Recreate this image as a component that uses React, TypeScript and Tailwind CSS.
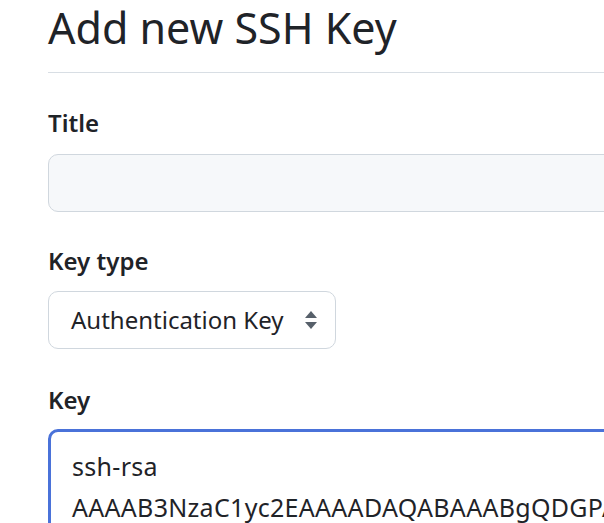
import { ReactNode } from "react"

const font = { fontFamily: '"Noto Sans", "Segoe UI", sans-serif' }

const Label = ({ children }: { children: ReactNode }) => (
  <div className="text-[24px] font-semibold leading-[36px] text-[#1f2328]">{children}</div>
)

export default function App() {
  return (
    <div className="w-[604px] h-[523px] overflow-hidden bg-white text-[#1f2328]" style={font}>
      <div className="w-[1000px] pl-[48px]">
        <div className="border-b border-[#d8dee4] pb-[16px]">
          <h2 className="text-[43px] font-normal leading-[56px]">Add new SSH Key</h2>
        </div>

        <div className="mt-[32px]">
          <Label>Title</Label>
          <div className="mt-[13px] h-[58px] rounded-[10px] border border-[#d0d7de] bg-[#f6f8fa]" />
        </div>

        <div className="mt-[31px]">
          <Label>Key type</Label>
          <div className="mt-[12px] flex h-[58px] w-[288px] items-center justify-between rounded-[10px] border border-[#d0d7de] bg-white pl-[22px] pr-[17px]">
            <span className="text-[24px] leading-[36px]">Authentication Key</span>
            <svg width="14" height="20" viewBox="0 0 14 20" className="text-[#57606a]">
              <path d="M7 1 L13 8 H1 Z" fill="currentColor" />
              <path d="M7 19 L13 12 H1 Z" fill="currentColor" />
            </svg>
          </div>
        </div>

        <div className="mt-[33px]">
          <Label>Key</Label>
          <div className="mt-[11px] h-[140px] rounded-[10px] border-[3px] border-[#4a72d9] bg-white pl-[21px] pt-[14px] text-[25px] leading-[41px] tracking-[0.3px]">
            <div>ssh-rsa</div>
            <div className="whitespace-nowrap">AAAAB3NzaC1yc2EAAAADAQABAAABgQDGPAx7kLqv9Wd2fHn</div>
          </div>
        </div>
      </div>
    </div>
  )
}
